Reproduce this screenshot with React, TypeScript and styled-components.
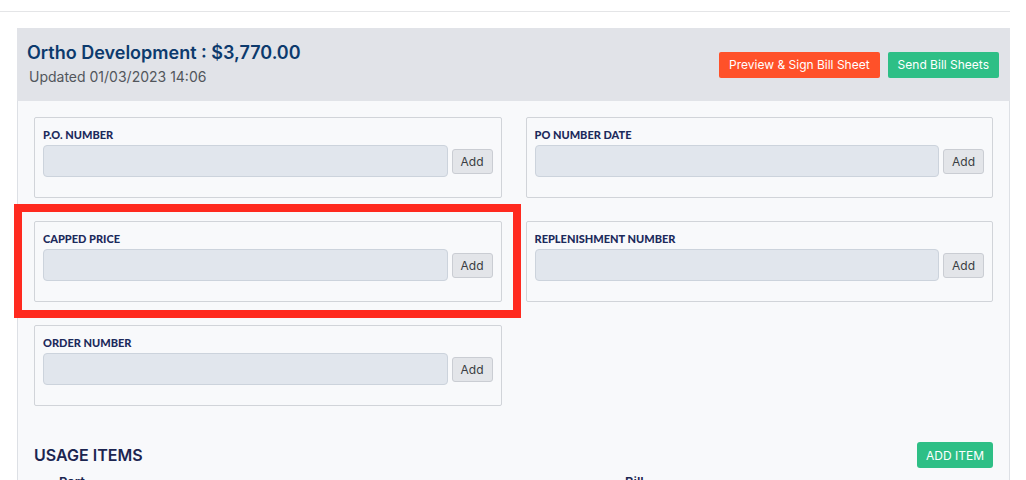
import styled, { createGlobalStyle } from "styled-components";

const GlobalStyle = createGlobalStyle`
  html, body {
    margin: 0;
    padding: 0;
    background: #ffffff;
    font-family: Inter, "Liberation Sans", sans-serif;
    overflow: hidden;
  }
  * {
    box-sizing: border-box;
  }
`;

const TopBar = styled.div`
  width: 1010px;
  height: 12px;
  border-bottom: 1px solid #e4e5e7;
`;

const Card = styled.section`
  width: 993px;
  margin: 16px 0 0 17px;
  border: 1px solid #dde0e5;
  border-top: none;
  background: #f8f9fb;
`;

const Header = styled.header`
  height: 73px;
  display: flex;
  align-items: center;
  justify-content: space-between;
  padding: 0 11px 0 10px;
  background: #e1e3e8;
  margin: 0 -1px;
`;

const TitleBlock = styled.div`
  display: flex;
  flex-direction: column;
  gap: 3px;
`;

const Title = styled.h2`
  margin: 0;
  font-size: 18px;
  line-height: 22px;
  font-weight: 600;
  color: #0c3a6d;
`;

const Updated = styled.div`
  font-size: 14px;
  line-height: 20px;
  color: #52565c;
  padding-left: 2px;
`;

const Actions = styled.div`
  display: flex;
  gap: 8px;
`;

const ActionButton = styled.button<{ $tone: "orange" | "green" }>`
  height: 26px;
  padding: 0 10px;
  border: none;
  border-radius: 2px;
  font-family: Inter, "Liberation Sans", sans-serif;
  font-size: 12px;
  color: #ffffff;
  background: ${(p) => (p.$tone === "orange" ? "#ff5129" : "#2ebf86")};
  cursor: pointer;
`;

const Body = styled.div`
  padding: 16px 16px 0 16px;
`;

const FieldGrid = styled.div`
  display: grid;
  grid-template-columns: 1fr 1fr;
  column-gap: 24px;
  row-gap: 23px;
  align-items: start;
`;

const FieldBox = styled.div`
  position: relative;
  height: 81px;
  border: 1px solid #d1d4d9;
  border-radius: 2px;
  padding: 10px 8px 0 8px;
`;

// red annotation frame drawn over the highlighted field
const Highlight = styled.div`
  position: absolute;
  left: -21px;
  top: -18px;
  right: -20px;
  bottom: -17px;
  border: 8px solid #ff2a1f;
  pointer-events: none;
`;

const FieldLabel = styled.label`
  display: block;
  font-family: Lato, "Noto Sans", sans-serif;
  font-size: 11px;
  line-height: 14px;
  font-weight: 900;
  color: #1c2a5c;
  text-transform: uppercase;
  margin-bottom: 3px;
`;

const FieldRow = styled.div`
  display: flex;
  align-items: center;
  gap: 4px;
`;

const FieldInput = styled.input`
  flex: 1;
  height: 32px;
  border: 1px solid #ccd3dc;
  border-radius: 4px;
  background: #e1e6ed;
  outline: none;
`;

const AddButton = styled.button`
  width: 41px;
  height: 25px;
  border: 1px solid #cacdd3;
  border-radius: 3px;
  background: #e3e5e9;
  font-family: Inter, "Liberation Sans", sans-serif;
  font-size: 12px;
  color: #3a3d42;
  padding: 0;
`;

const UsageRow = styled.div`
  display: flex;
  align-items: center;
  justify-content: space-between;
  margin-top: 36px;
`;

const UsageTitle = styled.h3`
  margin: 0;
  font-size: 16px;
  font-weight: 600;
  color: #1c2550;
`;

const AddItemButton = styled.button`
  height: 26px;
  padding: 0 9px;
  border: none;
  border-radius: 3px;
  background: #2ebf86;
  color: #ffffff;
  font-family: Inter, "Liberation Sans", sans-serif;
  font-size: 12px;
  text-transform: uppercase;
`;

const TableHead = styled.div`
  display: grid;
  grid-template-columns: 566px 1fr;
  padding: 6px 0 0 25px;
  font-size: 13px;
  font-weight: 600;
  color: #1c2550;
`;

const fields = [
  { label: "P.O. Number" },
  { label: "PO Number Date" },
  { label: "Capped Price", highlighted: true },
  { label: "Replenishment Number" },
  { label: "Order Number" },
];

export default function App() {
  return (
    <>
      <GlobalStyle />
      <TopBar />
      <Card>
        <Header>
          <TitleBlock>
            <Title>Ortho Development : $3,770.00</Title>
            <Updated>Updated 01/03/2023 14:06</Updated>
          </TitleBlock>
          <Actions>
            <ActionButton $tone="orange">Preview &amp; Sign Bill Sheet</ActionButton>
            <ActionButton $tone="green">Send Bill Sheets</ActionButton>
          </Actions>
        </Header>
        <Body>
          <FieldGrid>
            {fields.map((f) => (
              <FieldBox key={f.label}>
                <FieldLabel>{f.label}</FieldLabel>
                <FieldRow>
                  <FieldInput />
                  <AddButton>Add</AddButton>
                </FieldRow>
                {f.highlighted && <Highlight />}
              </FieldBox>
            ))}
          </FieldGrid>
          <UsageRow>
            <UsageTitle>USAGE ITEMS</UsageTitle>
            <AddItemButton>Add Item</AddItemButton>
          </UsageRow>
          <TableHead>
            <span>Part</span>
            <span>Bill</span>
          </TableHead>
        </Body>
      </Card>
    </>
  );
}
